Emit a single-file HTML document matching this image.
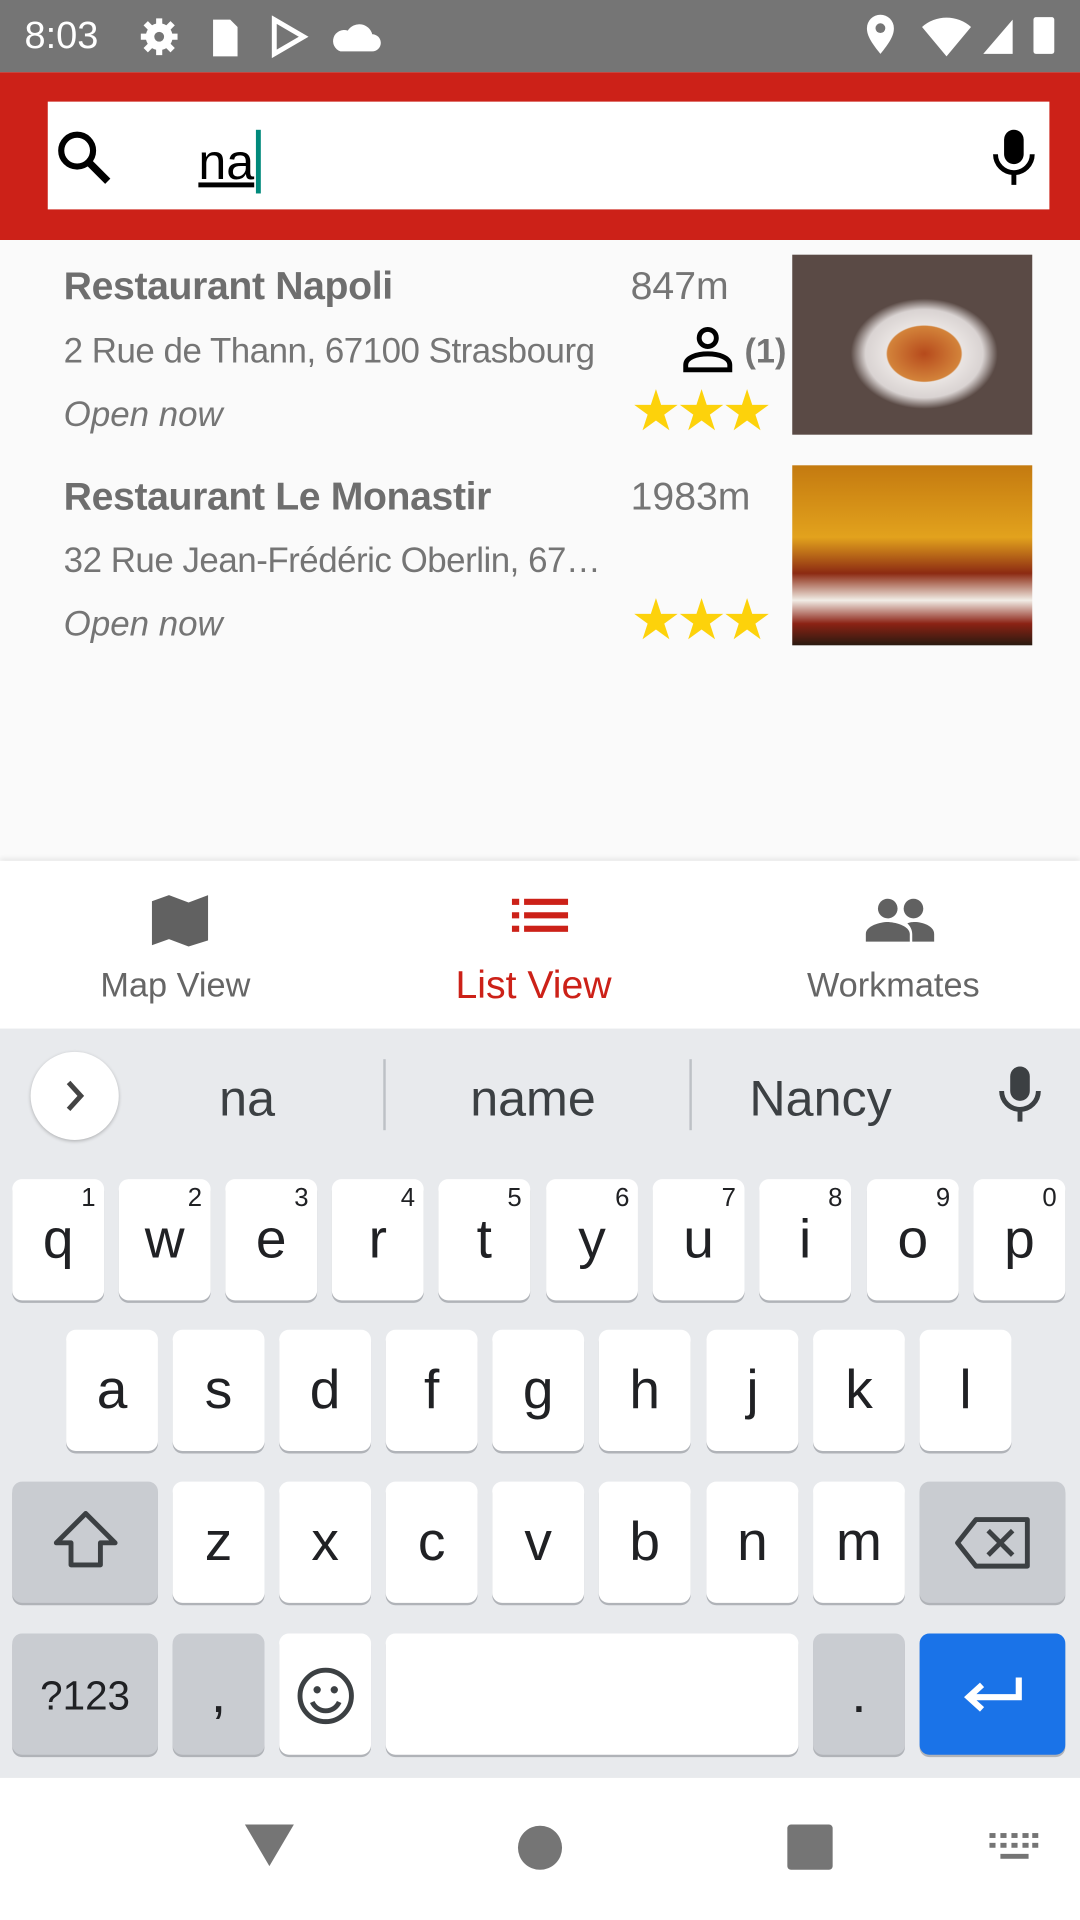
<!DOCTYPE html>
<html><head><meta charset="utf-8"><style>
*{margin:0;padding:0;box-sizing:border-box}
html,body{width:1080px;height:1920px;overflow:hidden;background:#fafafa;font-family:"Liberation Sans",sans-serif}
#w{width:882px;height:1568px;transform:scale(1.22449);transform-origin:0 0;position:relative}
.a{position:absolute}
.key{position:absolute;width:75px;height:99px;background:#fff;border-radius:8px;box-shadow:0 2px 0 #b0b3b8;font-size:45px;color:#202124;text-align:center;line-height:98px}
.key sup{position:absolute;right:7px;top:4px;font-size:21px;line-height:24px}
.sp{background:#c9ccd1}
.t{color:#757575}
.st{color:#fdd20b;font-size:46px;letter-spacing:-4px}
</style></head><body><div id="w">
<div class="a" style="left:0;top:0;width:882px;height:59px;background:#757575"></div>
<div class="a" style="left:20px;top:11px;color:#fff;font-size:31px">8:03</div>
<svg class="a" style="left:112px;top:12px" width="200" height="36" fill="#fff">
<circle cx="18" cy="18" r="11"/><path d="M18 3v30M3 18h30M7 7l22 22M29 7L7 29" stroke="#fff" stroke-width="5"/><circle cx="18" cy="18" r="4" fill="#757575"/>
<path d="M62 4h14l6 6v24h-20z"/><path d="M112 4l24 14-24 14z" fill="none" stroke="#fff" stroke-width="4"/>
<path d="M166 30h26a7 7 0 0 0 0-14 11 11 0 0 0-20-3 8 8 0 0 0-6 17z"/></svg>
<svg class="a" style="left:705px;top:10px" width="170" height="38" fill="#fff">
<path d="M14 34C4 22 3 17 3 13a11 11 0 0 1 22 0c0 4-1 9-11 21z"/><circle cx="14" cy="13" r="4" fill="#757575"/>
<path d="M48 12a30 30 0 0 1 40 0L68 36z"/><path d="M122 34V6L98 34z"/>
<rect x="139" y="4" width="17" height="30" rx="2"/></svg>
<div class="a" style="left:0;top:59px;width:882px;height:137px;background:#cc2118"></div>
<div class="a" style="left:39px;top:83px;width:818px;height:88px;background:#fff"></div>
<svg class="a" style="left:44px;top:104px" width="50" height="50"><circle cx="19" cy="19" r="13" fill="none" stroke="#000" stroke-width="5"/><path d="M28 28l16 16" stroke="#000" stroke-width="6"/></svg>
<div class="a" style="left:162px;top:109px;font-size:41px;color:#000;text-decoration:underline">na</div>
<div class="a" style="left:209px;top:106px;width:4px;height:52px;background:#00897b"></div>
<svg class="a" style="left:808px;top:104px" width="40" height="50"><rect x="12" y="2" width="16" height="28" rx="8"/><path d="M5 22a15 15 0 0 0 30 0" fill="none" stroke="#000" stroke-width="4"/><path d="M20 37v10" stroke="#000" stroke-width="4"/></svg>

<div class="a" style="left:52px;top:215px;font-size:32px;font-weight:bold;color:#6e6e6e;letter-spacing:-.3px">Restaurant Napoli</div>
<div class="a t" style="left:515px;top:215px;font-size:32px">847m</div>
<div class="a t" style="left:52px;top:271px;font-size:28.5px;letter-spacing:-.4px">2 Rue de Thann, 67100 Strasbourg</div>
<svg class="a" style="left:556px;top:266px" width="44" height="40"><circle cx="22" cy="10" r="7" fill="none" stroke="#000" stroke-width="4"/><path d="M4 36v-4c0-6 9-9 18-9s18 3 18 9v4z" fill="none" stroke="#000" stroke-width="4"/></svg>
<div class="a t" style="left:608px;top:271px;font-size:28px;font-weight:bold">(1)</div>
<div class="a t" style="left:52px;top:323px;font-size:28.5px;font-style:italic">Open now</div>
<div class="a st" style="left:515px;top:308px">★★★</div>
<div class="a" style="left:647px;top:208px;width:196px;height:147px;background:radial-gradient(ellipse 60px 45px at 55% 55%,#b64a1c,#d3833a 50%,#e9e4e2 52%,#d9d3d2 80%,#5a4a45 100%)"></div>

<div class="a" style="left:52px;top:387px;font-size:32px;font-weight:bold;color:#6e6e6e;letter-spacing:-.3px">Restaurant Le Monastir</div>
<div class="a t" style="left:515px;top:387px;font-size:32px">1983m</div>
<div class="a t" style="left:52px;top:442px;font-size:28.5px;letter-spacing:-.4px">32 Rue Jean-Frédéric Oberlin, 67…</div>
<div class="a t" style="left:52px;top:494px;font-size:28.5px;font-style:italic">Open now</div>
<div class="a st" style="left:515px;top:479px">★★★</div>
<div class="a" style="left:647px;top:380px;width:196px;height:147px;background:linear-gradient(#c47a10,#e2a21d 40%,#8c2a12 60%,#f1ede6 75%,#8b2214 88%,#2a1a10)"></div>

<div class="a" style="left:0;top:703px;width:882px;height:137px;background:#fff;box-shadow:0 -2px 4px rgba(0,0,0,.08)"></div>
<svg class="a" style="left:124px;top:730px" width="46" height="44" fill="#616161"><path d="M0 6l14-5 16 6 16-6v37l-16 5-16-6-14 5z"/></svg>
<div class="a t" style="left:82px;top:789px;font-size:28px;color:#666">Map View</div>
<svg class="a" style="left:418px;top:733px" width="46" height="30" fill="#cc2118"><rect x="0" y="1" width="6" height="5"/><rect x="10" y="1" width="36" height="5"/><rect x="0" y="12" width="6" height="5"/><rect x="10" y="12" width="36" height="5"/><rect x="0" y="23" width="6" height="5"/><rect x="10" y="23" width="36" height="5"/></svg>
<div class="a" style="left:372px;top:786px;font-size:32px;color:#cc2118">List View</div>
<svg class="a" style="left:707px;top:733px" width="56" height="38" fill="#616161"><circle cx="18" cy="9" r="8"/><circle cx="39" cy="9" r="8"/><path d="M0 36v-6c0-7 12-10 18-10s18 3 18 10v6z"/><path d="M38 36v-6c0-4-2-7-4-9 3-1 5-1 6-1 6 0 16 3 16 10v6z"/></svg>
<div class="a t" style="left:659px;top:789px;font-size:28px;color:#666">Workmates</div>

<div class="a" style="left:0;top:840px;width:882px;height:612px;background:#e8eaed"></div>
<div class="a" style="left:25px;top:859px;width:72px;height:72px;border-radius:50%;background:#fff;box-shadow:0 1px 3px rgba(0,0,0,.25)"></div>
<svg class="a" style="left:48px;top:880px" width="26" height="30"><path d="M8 4l10 11-10 11" fill="none" stroke="#444" stroke-width="4"/></svg>
<div class="a" style="left:179px;top:874px;font-size:41px;color:#3c4043">na</div>
<div class="a" style="left:313px;top:865px;width:2px;height:58px;background:#bdc1c6"></div>
<div class="a" style="left:384px;top:874px;font-size:41px;color:#3c4043">name</div>
<div class="a" style="left:563px;top:865px;width:2px;height:58px;background:#bdc1c6"></div>
<div class="a" style="left:612px;top:874px;font-size:41px;color:#3c4043">Nancy</div>
<svg class="a" style="left:814px;top:870px" width="38" height="48" fill="#3c4043"><rect x="11" y="1" width="16" height="28" rx="8"/><path d="M4 21a15 15 0 0 0 30 0" fill="none" stroke="#3c4043" stroke-width="4"/><path d="M19 36v10" stroke="#3c4043" stroke-width="4"/></svg>

<div class="key" style="left:10px;top:963px">q<sup>1</sup></div>
<div class="key" style="left:97px;top:963px">w<sup>2</sup></div>
<div class="key" style="left:184px;top:963px">e<sup>3</sup></div>
<div class="key" style="left:271px;top:963px">r<sup>4</sup></div>
<div class="key" style="left:358px;top:963px">t<sup>5</sup></div>
<div class="key" style="left:446px;top:963px">y<sup>6</sup></div>
<div class="key" style="left:533px;top:963px">u<sup>7</sup></div>
<div class="key" style="left:620px;top:963px">i<sup>8</sup></div>
<div class="key" style="left:708px;top:963px">o<sup>9</sup></div>
<div class="key" style="left:795px;top:963px">p<sup>0</sup></div>

<div class="key" style="left:54px;top:1086px">a</div>
<div class="key" style="left:141px;top:1086px">s</div>
<div class="key" style="left:228px;top:1086px">d</div>
<div class="key" style="left:315px;top:1086px">f</div>
<div class="key" style="left:402px;top:1086px">g</div>
<div class="key" style="left:489px;top:1086px">h</div>
<div class="key" style="left:577px;top:1086px">j</div>
<div class="key" style="left:664px;top:1086px">k</div>
<div class="key" style="left:751px;top:1086px">l</div>

<div class="key sp" style="left:10px;top:1210px;width:119px"><svg width="56" height="52" style="margin-top:22px"><path d="M28 4L4 28h12v18h24V28h12z" fill="none" stroke="#3c4043" stroke-width="4" stroke-linejoin="round"/></svg></div>
<div class="key" style="left:141px;top:1210px">z</div>
<div class="key" style="left:228px;top:1210px">x</div>
<div class="key" style="left:315px;top:1210px">c</div>
<div class="key" style="left:402px;top:1210px">v</div>
<div class="key" style="left:489px;top:1210px">b</div>
<div class="key" style="left:577px;top:1210px">n</div>
<div class="key" style="left:664px;top:1210px">m</div>
<div class="key sp" style="left:751px;top:1210px;width:119px"><svg width="64" height="44" style="margin-top:28px"><path d="M18 3h42v38H18L3 22z" fill="none" stroke="#3c4043" stroke-width="4" stroke-linejoin="round"/><path d="M28 12l20 20M48 12L28 32" stroke="#3c4043" stroke-width="4"/></svg></div>

<div class="key sp" style="left:10px;top:1334px;width:119px;font-size:33px;line-height:102px">?123</div>
<div class="key sp" style="left:141px;top:1334px">,</div>
<div class="key" style="left:228px;top:1334px"><svg width="50" height="50" style="margin-top:26px"><circle cx="25" cy="25" r="21" fill="none" stroke="#3c4043" stroke-width="4"/><circle cx="18" cy="20" r="3" fill="#3c4043"/><circle cx="32" cy="20" r="3" fill="#3c4043"/><path d="M14 30a12 12 0 0 0 22 0" fill="none" stroke="#3c4043" stroke-width="4"/></svg></div>
<div class="key" style="left:315px;top:1334px;width:337px"></div>
<div class="key sp" style="left:664px;top:1334px">.</div>
<div class="key" style="left:751px;top:1334px;width:119px;background:#1a73e8"><svg width="50" height="34" style="margin-top:34px"><path d="M46 2v16H6M16 8L5 18l11 10" fill="none" stroke="#fff" stroke-width="5"/></svg></div>

<div class="a" style="left:0;top:1452px;width:882px;height:116px;background:#fff"></div>
<svg class="a" style="left:198px;top:1488px" width="44" height="38" fill="#757575"><path d="M2 2h40L22 36z"/></svg>
<div class="a" style="left:423px;top:1491px;width:36px;height:36px;border-radius:50%;background:#757575"></div>
<div class="a" style="left:643px;top:1490px;width:37px;height:37px;border-radius:3px;background:#757575"></div>
<svg class="a" style="left:808px;top:1497px" width="40" height="24" fill="#757575"><rect x="0" y="0" width="5" height="4"/><rect x="9" y="0" width="5" height="4"/><rect x="18" y="0" width="5" height="4"/><rect x="27" y="0" width="5" height="4"/><rect x="35" y="0" width="5" height="4"/><rect x="0" y="8" width="5" height="4"/><rect x="9" y="8" width="5" height="4"/><rect x="18" y="8" width="5" height="4"/><rect x="27" y="8" width="5" height="4"/><rect x="35" y="8" width="5" height="4"/><rect x="9" y="17" width="23" height="4"/></svg>
</div></body></html>
